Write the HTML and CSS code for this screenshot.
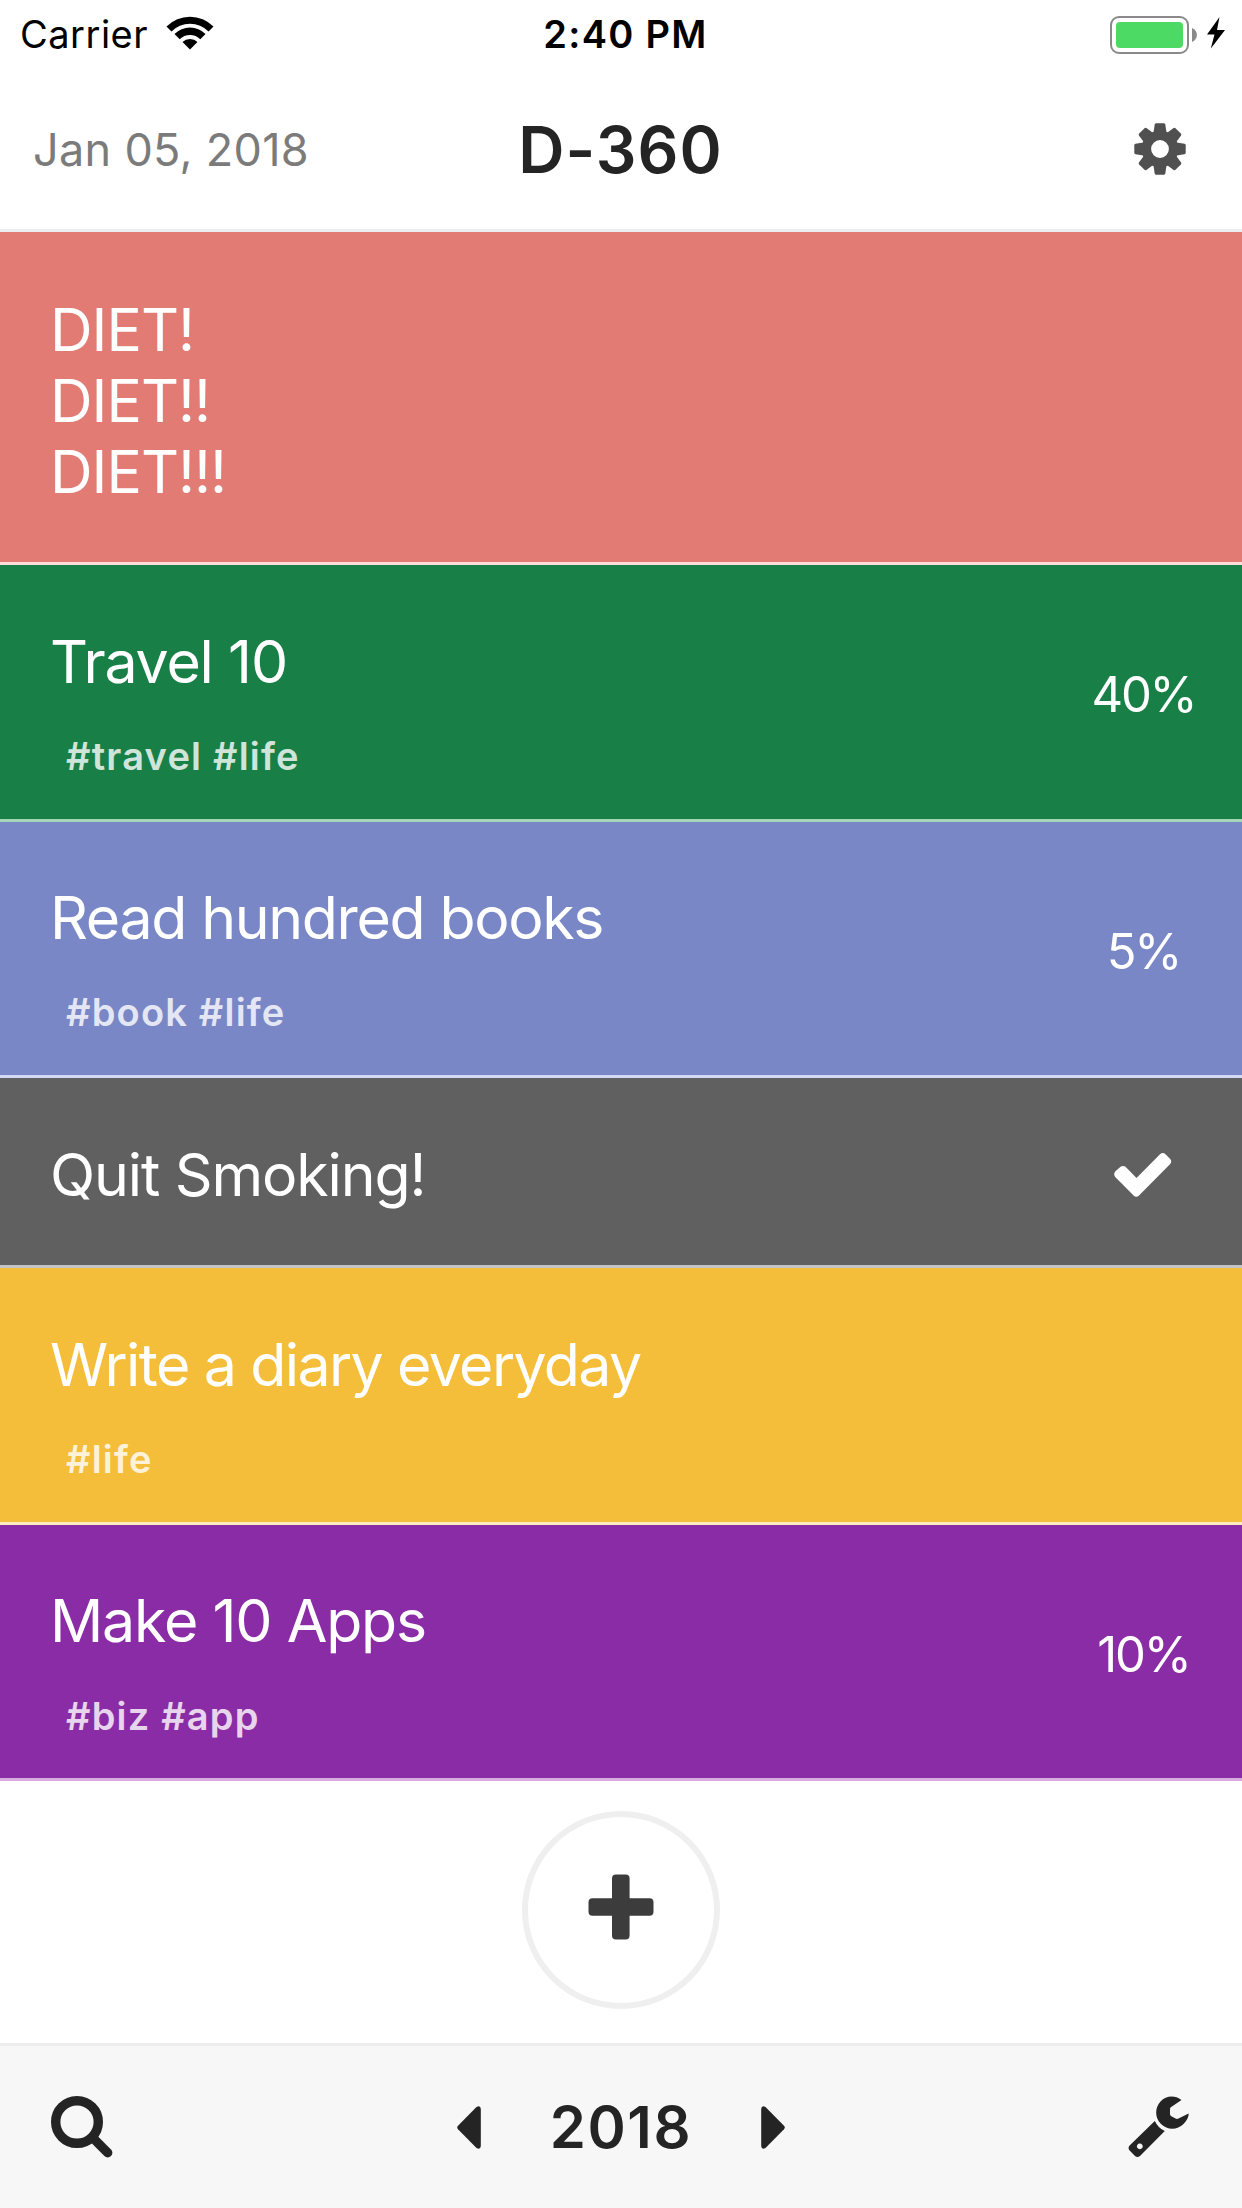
FILE: index.html
```html
<!DOCTYPE html>
<html lang="en">
<head>
    <meta charset="UTF-8">
    <meta name="viewport" content="width=device-width, initial-scale=1.0">
    <title>D-360</title>
    <link rel="stylesheet" href="styles.css">
</head>
<body>
    <header>
        <!-- Status bar -->
        <div class="status-bar">
            <div class="carrier">
                <span>Carrier</span>
                <svg class="wifi" width="48" height="34" viewBox="0 0 48 34">
                    <path d="M0.5 10.5 A33 33 0 0 1 47.5 10.5 L42.5 15.5 A26 26 0 0 0 5.5 15.5 Z"/>
                    <path d="M8.5 18 A22 22 0 0 1 39.5 18 L34.3 23.2 A14.6 14.6 0 0 0 13.7 23.2 Z"/>
                    <path d="M16.5 26 A10.7 10.7 0 0 1 31.5 26 L24 33.5 Z"/>
                </svg>
            </div>
            <div class="clock">2:40 PM</div>
            <div class="power">
                <div class="battery"><div class="battery-level"></div></div>
                <svg class="battery-tip" width="5" height="14" viewBox="0 0 5 14">
                    <path d="M0 0 C6.5 2.5 6.5 11.5 0 14 Z"/>
                </svg>
                <svg class="bolt" width="18" height="32" viewBox="0 0 18 32">
                    <path d="M12.5 0 L0 17.5 H7.5 L3.8 31.5 L18 13 H10 Z"/>
                </svg>
            </div>
        </div>

        <!-- Title bar -->
        <div class="navbar">
            <div class="date">Jan 05, 2018</div>
            <h1>D-360</h1>
            <svg class="gear" width="52" height="52" viewBox="-26 -26 52 52">
                <defs>
                    <path id="tooth" d="M-6.7 -15 L-5.3 -24.5 Q-5 -25.7 -3.8 -25.7 H3.8 Q5 -25.7 5.3 -24.5 L6.7 -15 Z"/>
                </defs>
                <circle r="13.6" fill="none" stroke="#505050" stroke-width="9.4"/>
                <use href="#tooth"/>
                <use href="#tooth" transform="rotate(45)"/>
                <use href="#tooth" transform="rotate(90)"/>
                <use href="#tooth" transform="rotate(135)"/>
                <use href="#tooth" transform="rotate(180)"/>
                <use href="#tooth" transform="rotate(225)"/>
                <use href="#tooth" transform="rotate(270)"/>
                <use href="#tooth" transform="rotate(315)"/>
            </svg>
        </div>
    </header>

    <main>
        <!-- Goals -->
        <section class="goal red">
            <div class="goal-text">
                <h2>DIET!<br>DIET!!<br>DIET!!!</h2>
            </div>
        </section>

        <section class="goal green">
            <div class="goal-text">
                <h2>Travel 10</h2>
                <p>#travel #life</p>
            </div>
            <div class="progress">40%</div>
        </section>

        <section class="goal blue">
            <div class="goal-text">
                <h2>Read hundred books</h2>
                <p>#book #life</p>
            </div>
            <div class="progress">5%</div>
        </section>

        <section class="goal gray">
            <div class="goal-text">
                <h2>Quit Smoking!</h2>
            </div>
            <div class="progress">
                <svg class="check" width="58" height="46" viewBox="0 0 58 46">
                    <path d="M1.2 19.5 L6.5 14.8 Q9 13 11.5 14.8 L22.5 26 L46 2.2 Q48.8 -0.3 51.5 2.2 L56.2 7 Q58.3 9.6 56.2 12 L25 43.5 Q22.3 46 19.6 43.5 L1.2 25 Q-0.9 22.3 1.2 19.5 Z"/>
                </svg>
            </div>
        </section>

        <section class="goal yellow">
            <div class="goal-text">
                <h2>Write a diary everyday</h2>
                <p>#life</p>
            </div>
        </section>

        <section class="goal purple">
            <div class="goal-text">
                <h2>Make 10 Apps</h2>
                <p>#biz #app</p>
            </div>
            <div class="progress">10%</div>
        </section>

        <!-- Add goal -->
        <button class="add" aria-label="Add">
            <svg width="66" height="66" viewBox="0 0 66 66">
                <rect x="24" y="0.5" width="17.6" height="65" rx="4"/>
                <rect x="0.5" y="24.2" width="65" height="17.6" rx="4"/>
            </svg>
        </button>
    </main>

    <footer>
        <svg class="search" width="62" height="62" viewBox="0 0 62 62">
            <circle cx="26" cy="26" r="21.3"/>
            <path d="M42 42 L56.7 56.7"/>
        </svg>
        <div class="year">
            <svg width="24" height="43" viewBox="0 0 24 43">
                <path d="M1 19.8 L19.5 1 Q23.5 -1 23.8 3 V40 Q23.5 44 19.5 42 L1 23.2 Q-0.6 21.5 1 19.8 Z"/>
            </svg>
            <span>2018</span>
            <svg width="24" height="43" viewBox="0 0 24 43">
                <path d="M23 19.8 L4.5 1 Q0.5 -1 0.2 3 V40 Q0.5 44 4.5 42 L23 23.2 Q24.6 21.5 23 19.8 Z"/>
            </svg>
        </div>
        <svg class="wrench" width="62" height="62" viewBox="0 0 62 62">
            <path d="M53.5 4 C47 -1 38 -0.5 32.5 5.5 C26.5 12 26.8 22 33 28 C39.5 34.5 49.5 34 55.5 28 C59 24.5 61 20.5 60.6 17.5 L50.5 22.6 Q49 23.3 47.5 22.6 L43.3 20.2 Q42 19.5 42 18 V13 Q42 11.7 43.2 11 Z"/>
            <path fill-rule="evenodd" d="M26.8 25 L1.6 49.5 Q-0.5 52 1.6 54.5 L7 60 Q9.5 62 12 60 L36.8 35 Q30.5 32.5 26.8 25 Z M11.8 47.5 a2.9 2.9 0 1 0 0.02 0 Z"/>
        </svg>
    </footer>
</body>
</html>
```
FILE: styles.css
```css
/* General Styles */
* {
    box-sizing: border-box;
}

body {
    margin: 0;
    height: 2208px;
    display: flex;
    flex-direction: column;
    font-family: Inter, "Liberation Sans", sans-serif;
    background-color: white;
    color: #242424;
}

svg {
    display: block;
}

h1,
h2,
p {
    margin: 0;
}

/* Header */
header {
    border-bottom: 3px solid #eaeef0;
}

.status-bar {
    display: grid;
    grid-template-columns: 1fr auto 1fr;
    height: 69px;
    line-height: 69px;
    padding: 0 17px 0 20px;
    font-size: 38px;
    color: black;
}

.carrier {
    display: flex;
    align-items: center;
    gap: 18px;
    letter-spacing: 0.5px;
}

.wifi {
    margin-bottom: 3px;
}

.clock {
    margin-left: 6px;
    font-weight: 600;
    letter-spacing: 1.3px;
}

.power {
    display: flex;
    align-items: center;
    justify-content: flex-end;
}

.battery {
    width: 79px;
    height: 38px;
    padding: 4px;
    border: 2.5px solid #8a8a8a;
    border-radius: 9px;
}

.battery-level {
    height: 100%;
    border-radius: 4px;
    background-color: #4cd964;
}

.battery-tip {
    margin-left: 3px;
    fill: #8a8a8a;
}

.bolt {
    margin: 0 0 3px 10px;
}

.navbar {
    display: grid;
    grid-template-columns: 1fr auto 1fr;
    align-items: center;
    height: 160px;
    padding: 0 56px 0 33px;
}

.date {
    font-size: 45px;
    letter-spacing: 0.3px;
    color: #7b7b7b;
}

h1 {
    margin-left: 22px;
    font-size: 64px;
    font-weight: 600;
    letter-spacing: 1px;
}

.gear {
    justify-self: end;
    fill: #505050;
}

/* Goals */
main {
    flex: 1;
}

.goal {
    display: flex;
    height: 256.7px;
    border-bottom: 3px solid;
    color: white;
}

.goal-text {
    flex: 1;
    padding: 60.5px 0 0 50px;
}

.goal h2 {
    font-size: 59px;
    font-weight: 400;
    line-height: 71.3px;
    letter-spacing: -1.2px;
}

.goal p {
    padding: 44px 0 0 16px;
    font-size: 38px;
    font-weight: 600;
    line-height: 30px;
    letter-spacing: 1.2px;
    opacity: 0.8;
}

.progress {
    display: flex;
    align-items: center;
    justify-content: center;
    width: 197px;
    padding-top: 6px;
    font-size: 49px;
    letter-spacing: -2.2px;
}

.check {
    margin-right: 2px;
    fill: white;
}

.red {
    height: 333px;
    background-color: #e27b74;
    border-color: #fbdcd9;
}

.red h2 {
    padding-top: 1px;
    letter-spacing: -1px;
}

.green {
    background-color: #187f47;
    border-color: #a6d6b8;
}

.blue {
    background-color: #7987c7;
    border-color: #d4daf4;
}

.blue h2 {
    letter-spacing: -1.35px;
}

.gray {
    height: 189.7px;
    background-color: #606060;
    border-color: #c3c4c7;
}

.gray h2 {
    letter-spacing: -1.1px;
}

.yellow {
    background-color: #f4be3b;
    border-color: #fdebc0;
}

.yellow h2 {
    letter-spacing: -1.6px;
}

.purple {
    background-color: #8a2ca5;
    border-color: #d8abe0;
}

/* Add button */
.add {
    display: flex;
    align-items: center;
    justify-content: center;
    width: 198px;
    height: 198px;
    margin: 29.5px auto 0;
    padding: 0 1px 6px 0;
    border: 6px solid #efefef;
    border-radius: 50%;
    background: white;
    fill: #3c3c3c;
}

/* Footer */
footer {
    display: flex;
    align-items: center;
    justify-content: space-between;
    height: 165px;
    padding: 0 52px 0 51px;
    border-top: 3px solid #ededed;
    background-color: #f7f7f7;
    fill: #242424;
}

.search {
    fill: none;
    stroke: #242424;
    stroke-width: 9.4;
    stroke-linecap: round;
}

.year {
    display: flex;
    align-items: center;
    gap: 69px;
    margin-left: 1px;
    font-size: 58px;
    font-weight: 600;
    letter-spacing: 1.6px;
}
```
